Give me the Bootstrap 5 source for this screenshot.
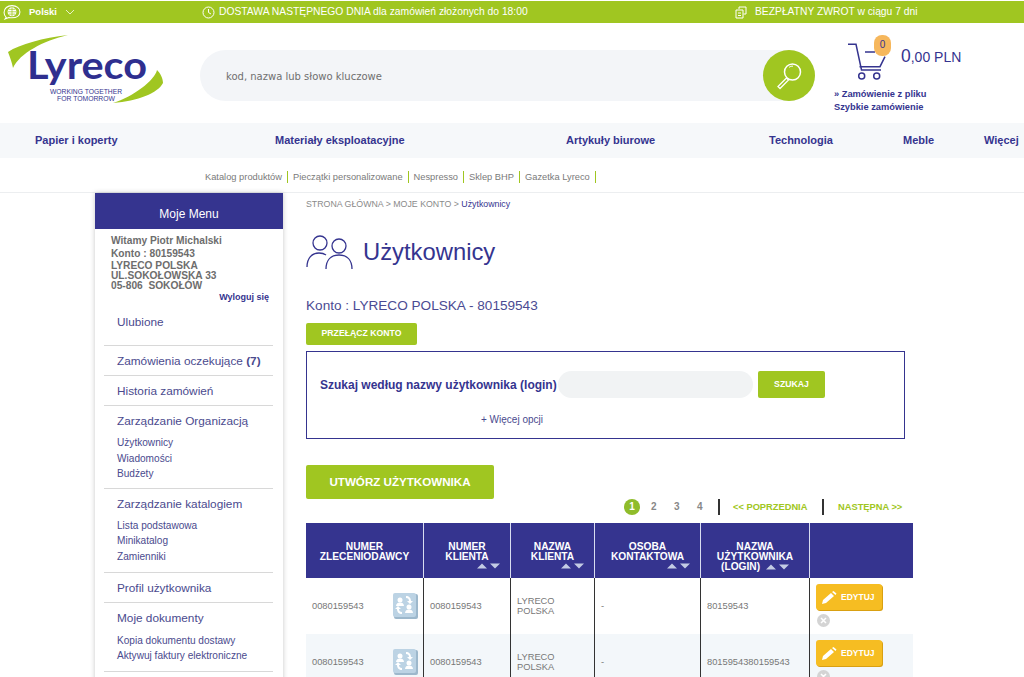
<!DOCTYPE html>
<html lang="pl">
<head>
    <meta charset="UTF-8">
    <meta name="viewport" content="width=device-width, initial-scale=1.0">
    <title>Lyreco - Użytkownicy</title>
    <link href="https://cdn.jsdelivr.net/npm/bootstrap@5.3.3/dist/css/bootstrap.min.css" rel="stylesheet">
    <style>
        html, body { height: 677px; overflow: hidden; }
        body { font-family: "Liberation Sans", Arial, sans-serif; color: #35348f; background: #fff; font-size: 12px; }
        a { color: inherit; text-decoration: none; }

        /* top bar */
        .top-bar { margin-top: 1px; height: 22px; background: #a0c621; color: #fff; font-size: 10.3px; }
        .top-lang { width: 200px; padding-left: 3px; font-size: 9.5px; font-weight: 700; }
        .top-msg { white-space: nowrap; }
        .top-msg-a { width: 535px; padding-left: 2px; }

        /* header */
        .head-row { height: 100px; }
        .logo-box { width: 200px; padding: 12px 0 0 8px; }
        .search-pill { width: 615px; height: 51px; margin-top: 27px; background: #f3f5f8; border-radius: 26px; }
        .search-pill input { border: 0; background: transparent; outline: 0; width: 540px; padding: 1px 0 0 26px; font: 10px "DejaVu Sans", sans-serif; color: #666; }
        .search-pill input::placeholder { color: #6f6f6f; opacity: 1; }
        .search-round { width: 52px; height: 51px; background: #a0c621; border-radius: 50%; }
        .cart-box { padding: 12px 0 0 19px; }
        .cart-top { margin-left: 14px; }
        .cart-count { position: absolute; left: 26px; top: 0; width: 17px; height: 21px; line-height: 20px; background: #f6b75c; border-radius: 8px; text-align: center; font-size: 10px; color: #35348f; }
        .cart-total { font-size: 14px; color: #35348f; margin: 11px 0 0 13px; line-height: 21px; white-space: nowrap; }
        .cart-total b { font-weight: 400; font-size: 17.5px; }
        .cart-links { font-size: 9.3px; font-weight: 700; line-height: 13px; margin-top: 7px; }

        /* navigation */
        .main-nav { height: 35px; background: #f6f8fa; display: grid; grid-template-columns: 240px 291px 203px 134px 81px auto; padding-left: 35px; align-items: center; font-size: 11px; font-weight: 700; color: #35348f; white-space: nowrap; }
        .sub-nav { height: 35px; padding: 3px 0 0 205px; border-bottom: 1px solid #eceef0; font-size: 9.3px; color: #7a7a7a; }
        .sub-nav a { padding-right: 5px; margin-right: 5px; border-right: 1px solid #a0c621; line-height: 12px; }

        /* sidebar */
        .side-col { width: 188px; margin-left: 95px; box-shadow: 0 0 5px rgba(0,0,0,.22); flex: none; height: 500px; }
        .side-title { height: 36px; padding-top: 5px; background: #35348f; color: #fff; font-size: 12px; }
        .side-user { padding: 5px 14px 0 16px; font-size: 10.2px; color: #6d6d6d; font-weight: 700; }
        .side-user div { line-height: 13px; }
        .side-user .addr { line-height: 10px; padding-top: 1px; }
        .side-out { text-align: right; font-size: 9px; color: #35348f; margin-top: 0; line-height: 12px !important; }
        .side-menu { margin: 0 10px 0 9px; padding-top: 12px; }
        .side-item { padding: 8px 0 6px 13px; border-bottom: 1.5px solid #d8d8d8; font-size: 11.8px; line-height: 15px; color: #4a4a8e; }
        .side-item.first { padding: 0 0 15px 13px; }
        .side-item .subs { font-size: 10.1px; line-height: 15.6px; margin-top: 6px; }
        .side-item .subs-a { padding-bottom: 1px; }
        .side-item .subs-b { margin-top: 7px; padding-bottom: 1px; }

        /* content */
        .content-col { width: 607px; margin-left: 23px; flex: none; }
        .crumbs { font-size: 8.8px; color: #8a8a8a; margin-top: 6px; line-height: 11px; }
        .crumbs span { color: #35348f; }
        .page-title { font-size: 23.8px; line-height: 28px; margin: 0 0 0 1px; color: #35348f; font-weight: 400; }
        .title-row { margin-top: 24px; height: 36px; }
        .konto-line { font-size: 13.6px; line-height: 17px; margin-top: 27px; color: #4b4b93; }
        .btn-green { background: #a0c621; color: #fff; font-weight: 700; border: 0; border-radius: 2px; padding: 0; display: flex; align-items: center; justify-content: center; }
        .btn-green:hover { background: #8fb31b; color: #fff; }
        .btn-switch { width: 111px; height: 22px; font-size: 8.7px; margin-top: 9px; }
        .search-box { width: 599px; height: 88px; border: 1px solid #35348f; margin-top: 6px; padding: 19px 0 0 13px; }
        .search-box label { width: 238px; font-size: 12px; font-weight: 700; white-space: nowrap; padding-top: 1px; }
        .search-box input { width: 195px; height: 27px; border: 0; background: #f1f3f4; border-radius: 14px; margin-right: 5px; }
        .btn-find { width: 67px; height: 27px; font-size: 8.7px; }
        .more-opts { font-size: 10px; margin: 16px 0 0 161px; color: #4a4a8e; line-height: 12px; }
        .btn-create { width: 188px; height: 34px; font-size: 11.6px; margin-top: 26px; }

        .pager { height: 24px; font-size: 10px; color: #888; font-weight: 700; position: relative; }
        .pg-num { position: absolute; top: 0; line-height: 16px; }
        .pg-on { left: 318px; top: 0; width: 16px; height: 16px; background: #8fbc2b; color: #fff; border-radius: 50%; text-align: center; }
        .pg-sep { position: absolute; top: 0; width: 1.5px; height: 16px; background: #333; }
        .pg-link { position: absolute; top: 0; line-height: 16px; font-size: 9.3px; color: #a0c621; white-space: nowrap; }

        .users-table { width: 607px; table-layout: fixed; border-collapse: separate; border-spacing: 0; margin: 0; font-size: 9.3px; color: #777; }
        .users-table th { background: #35348f; color: #fff; font-size: 10.2px; line-height: 10px; font-weight: 700; text-align: center; vertical-align: top; border: 0; border-right: 1px solid #d8dcf0; padding: 19px 2px 0; height: 55px; }
        .users-table th:last-child { border-right: 0; }
        .users-table td { height: 56px; padding: 0 5px 0 6px; vertical-align: middle; border: 0; border-right: 1.5px solid #333; line-height: 10px; background: #fff; color: #777; }
        .users-table td:last-child { border-right: 0; vertical-align: top; padding-top: 6px; }
        .users-table tr.alt td { background: #f3f7fa; }
        .sort-icons { display: block; text-align: right; height: 8px; line-height: 8px; }
        .sort-inline { display: inline-block; margin-left: 3px; }
        .btn-edit { width: 66px; height: 26px; background: #f6bd22; color: #fff; border-radius: 3px; box-shadow: 1px 1px 0 #d9a012; font-size: 8.5px; font-weight: 700; border: 0; padding: 0 0 0 6px; gap: 4px; }
        .del-mark { display: block; margin: 4px 0 0 1px; }
    </style>
</head>
<body>
    <div class="top-bar d-flex align-items-center">
        <div class="top-lang d-flex align-items-center gap-2">
            <svg width="18" height="16" viewBox="0 0 17 15" fill="none" stroke="#fff"><path d="M3 12.500C1.600 11.400 1 10 1 8c0-4 3.200-6.500 7.500-6.500S16 4 16 7.500 12.800 13 8.500 13c-1 0-2-.1-2.800-.4L2 14z" stroke-width="1"/><circle cx="8.500" cy="7.300" r="4.200" fill="#fff" stroke="none"/><path d="M4.500 7.300h8M8.500 3.200v8.200M5.500 5h6M5.500 9.500h6" stroke="#a0c621" stroke-width=".7"/></svg>
            <span>Polski</span>
            <svg width="10" height="6" viewBox="0 0 10 6" fill="none" stroke="#e8f2c4"><path d="M1 1l4 4 4-4"/></svg>
        </div>
        <div class="top-msg top-msg-a d-flex align-items-center gap-1">
            <svg width="13" height="13" viewBox="0 0 13 13" fill="none" stroke="#fff"><circle cx="6.500" cy="6.500" r="5.500"/><path d="M6.500 3v3.500l2.500 1.500"/></svg>
            <span>DOSTAWA NASTĘPNEGO DNIA dla zamówień złożonych do 18:00</span>
        </div>
        <div class="top-msg d-flex align-items-center gap-2">
            <svg width="12" height="13" viewBox="0 0 12 13" fill="none" stroke="#fff"><path d="M4 3V1h7v7H8.500M1 4h7v8H1zM3 7h3M3 9.500h3"/></svg>
            <span>BEZPŁATNY ZWROT w ciągu 7 dni</span>
        </div>
    </div>

    <div class="head-row d-flex">
        <div class="logo-box">
            <svg width="160" height="72" viewBox="0 0 160 72">
                <path d="M60 0C35 3 12 9 0 17c2 5 4 11 5 16C12 18 35 6 60 0z" fill="#a0c621"/>
                <path d="M149 35c-2 10-24 27-44 33 25-2 45-10 50-20 0-5-3-10-6-13z" fill="#a0c621"/>
                <text x="19" y="44" font-family="Lato, 'Open Sans', sans-serif" font-weight="700" font-size="39" fill="#2f2f8f" textLength="120" lengthAdjust="spacingAndGlyphs">Lyreco</text>
                <text x="42" y="58.500" font-family="'Liberation Sans', sans-serif" font-size="6.500" fill="#35348f" textLength="72" lengthAdjust="spacingAndGlyphs">WORKING TOGETHER</text>
                <text x="49" y="65.500" font-family="'Liberation Sans', sans-serif" font-size="6.500" fill="#35348f" textLength="58" lengthAdjust="spacingAndGlyphs">FOR TOMORROW</text>
            </svg>
        </div>
        <div class="search-pill d-flex align-items-center justify-content-between">
            <input type="text" placeholder="kod, nazwa lub słowo kluczowe">
            <div class="search-round d-flex align-items-center justify-content-center">
                <svg width="28" height="30" viewBox="0 0 28 30" fill="none" stroke="#fff"><circle cx="17.500" cy="11" r="8" stroke-width="1.500"/><path d="M14 6.500c1-1 2.500-1.500 4-1.300" stroke-width="1"/><path d="M11.500 17 3 25.500l2 2 8.500-8.500z" stroke-width="1.300"/></svg>
            </div>
        </div>
        <div class="cart-box">
            <div class="cart-top d-flex position-relative">
                <svg width="40" height="38" viewBox="0 0 40 38" fill="none" stroke="#35348f" stroke-width="1.500" class="mt-2"><path d="M0 1.300h8l5.500 25.700H33M17 9h10M11.500 23.700H32l5-10"/><circle cx="13.700" cy="33" r="3"/><circle cx="28.700" cy="33" r="3"/></svg>
                <span class="cart-count">0</span>
                <div class="cart-total"><b>0</b>,00 PLN</div>
            </div>
            <div class="cart-links"><a href="#">» Zamówienie z pliku</a><br><a href="#">Szybkie zamówienie</a></div>
        </div>
    </div>

    <nav class="main-nav">
        <a href="#">Papier i koperty</a>
        <a href="#">Materiały eksploatacyjne</a>
        <a href="#">Artykuły biurowe</a>
        <a href="#">Technologia</a>
        <a href="#">Meble</a>
        <a href="#">Więcej</a>
    </nav>
    <div class="sub-nav d-flex align-items-center">
        <a href="#">Katalog produktów</a>
        <a href="#">Pieczątki personalizowane</a>
        <a href="#">Nespresso</a>
        <a href="#">Sklep BHP</a>
        <a href="#">Gazetka Lyreco</a>
    </div>

    <div class="d-flex">
        <aside class="side-col">
            <div class="side-title d-flex align-items-center justify-content-center">Moje Menu</div>
            <div class="side-user">
                <div>Witamy Piotr Michalski</div>
                <div>Konto : 80159543</div>
                <div class="addr">LYRECO POLSKA<br>UL.SOKOŁOWSKA 33<br>05-806&nbsp; SOKOŁÓW</div>
                <div class="side-out"><a href="#">Wyloguj się</a></div>
            </div>
            <div class="side-menu">
                <div class="side-item first">Ulubione</div>
                <div class="side-item">Zamówienia oczekujące <b>(7)</b></div>
                <div class="side-item">Historia zamówień</div>
                <div class="side-item">Zarządzanie Organizacją
                    <div class="subs">Użytkownicy<br>Wiadomości<br>Budżety</div>
                </div>
                <div class="side-item">Zarządzanie katalogiem
                    <div class="subs subs-a">Lista podstawowa<br>Minikatalog<br>Zamienniki</div>
                </div>
                <div class="side-item">Profil użytkownika</div>
                <div class="side-item">Moje dokumenty
                    <div class="subs subs-b">Kopia dokumentu dostawy<br>Aktywuj faktury elektroniczne</div>
                </div>
            </div>
        </aside>

        <main class="content-col">
            <div class="crumbs">STRONA GŁÓWNA &gt; MOJE KONTO &gt; <span>Użytkownicy</span></div>
            <div class="title-row d-flex align-items-center gap-2">
                <svg width="48" height="36" viewBox="0 0 48 36" fill="none" stroke="#35348f" stroke-width="1.300"><circle cx="14" cy="9" r="7"/><circle cx="33" cy="12" r="7"/><path d="M1 33c0-9 5-14 12-14 3 0 5 .5 7 2M20 35c0-9 5-14 13-14s13 5 13 14"/></svg>
                <h1 class="page-title">Użytkownicy</h1>
            </div>
            <div class="konto-line">Konto : LYRECO POLSKA - 80159543</div>
            <button class="btn btn-green btn-switch">PRZEŁĄCZ KONTO</button>
            <div class="search-box">
                <div class="d-flex align-items-center">
                    <label>Szukaj według nazwy użytkownika (login)</label>
                    <input type="text">
                    <button class="btn btn-green btn-find">SZUKAJ</button>
                </div>
                <div class="more-opts">+ Więcej opcji</div>
            </div>
            <button class="btn btn-green btn-create">UTWÓRZ UŻYTKOWNIKA</button>

            <div class="pager" id="pager"></div>

            <table class="table users-table">
                <colgroup><col style="width:118px"><col style="width:87px"><col style="width:84px"><col style="width:106px"><col style="width:109px"><col></colgroup>
                <thead>
                    <tr id="tableHead"></tr>
                </thead>
                <tbody id="userRows"></tbody>
            </table>
        </main>
    </div>

    <script src="https://cdn.jsdelivr.net/npm/bootstrap@5.3.3/dist/js/bootstrap.bundle.min.js"></script>
    <script>
        // pager
        const pager = document.getElementById('pager');
        pager.innerHTML = `
            <span class="pg-num pg-on">1</span>
            <span class="pg-num" style="left:345px">2</span>
            <span class="pg-num" style="left:368px">3</span>
            <span class="pg-num" style="left:391px">4</span>
            <span class="pg-sep" style="left:412px"></span>
            <a class="pg-link" style="left:427px" href="#">&lt;&lt; POPRZEDNIA</a>
            <span class="pg-sep" style="left:516px"></span>
            <a class="pg-link" style="left:532px" href="#">NASTĘPNA &gt;&gt;</a>`;

        // table
        const sortSvg = '<svg width="23" height="6" viewBox="0 0 23 6" fill="#c3cbe4"><path d="M0 5.500 5 .5l5 5zM13 .5h10l-5 5z"/></svg>';
        const heads = [
            ['NUMER<br>ZLECENIODAWCY', false],
            ['NUMER<br>KLIENTA', true],
            ['NAZWA<br>KLIENTA', true],
            ['OSOBA<br>KONTAKTOWA', true],
            ['NAZWA<br>UŻYTKOWNIKA<br>(LOGIN) <span class="sort-inline">' + sortSvg + '</span>', false],
            ['', false]
        ];
        document.getElementById('tableHead').innerHTML = heads.map(h =>
            `<th>${h[0]}${h[1] ? '<span class="sort-icons pe-2">' + sortSvg + '</span>' : ''}</th>`).join('');

        const swapIcon = `<svg width="25" height="26" viewBox="0 0 25 26" class="flex-shrink-0">
            <rect x="1" y="1" width="24" height="25" rx="2" fill="#9db8cc"/><rect width="23" height="24" rx="2" fill="#bcd3e4"/>
            <g fill="#fff"><circle cx="7" cy="7" r="2.500"/><path d="M3 13c0-2.500 2-3.500 4-3.500s4 1 4 3.500z"/><circle cx="16" cy="14" r="2.500"/><path d="M12 20c0-2.500 2-3.500 4-3.500s4 1 4 3.500z"/><path d="M13 3c3 0 5 2 5 5h2l-3 3-3-3h2c0-2-1-3-3-3zM9 21c-3 0-5-2-5-5H2l3-3 3 3H6c0 2 1 3 3 3z"/></g></svg>`;
        const pencil = '<svg width="15" height="13" viewBox="0 0 15 13" fill="#fff"><path d="M0 13l1-4 8-7 3 3-8 7zM10 1l1.500-1 3 2.500-1 1.500z"/></svg>';
        const delMark = '<svg class="del-mark" width="13" height="13" viewBox="0 0 13 13"><circle cx="6.500" cy="6.500" r="6.500" fill="#d4d4d4"/><path d="M4 4l5 5M9 4l-5 5" stroke="#fff" stroke-width="1.500"/></svg>';
        const users = [
            { login: '80159543' },
            { login: '8015954380159543' }
        ];
        document.getElementById('userRows').innerHTML = users.map((u, i) => `
            <tr class="${i % 2 ? 'alt' : ''}">
                <td><div class="d-flex align-items-center justify-content-between">0080159543 ${swapIcon}</div></td>
                <td>0080159543</td>
                <td>LYRECO<br>POLSKA</td>
                <td>-</td>
                <td>${u.login}</td>
                <td><button class="btn btn-edit d-flex align-items-center">${pencil}EDYTUJ</button>${delMark}</td>
            </tr>`).join('');
    </script>
</body>
</html>
